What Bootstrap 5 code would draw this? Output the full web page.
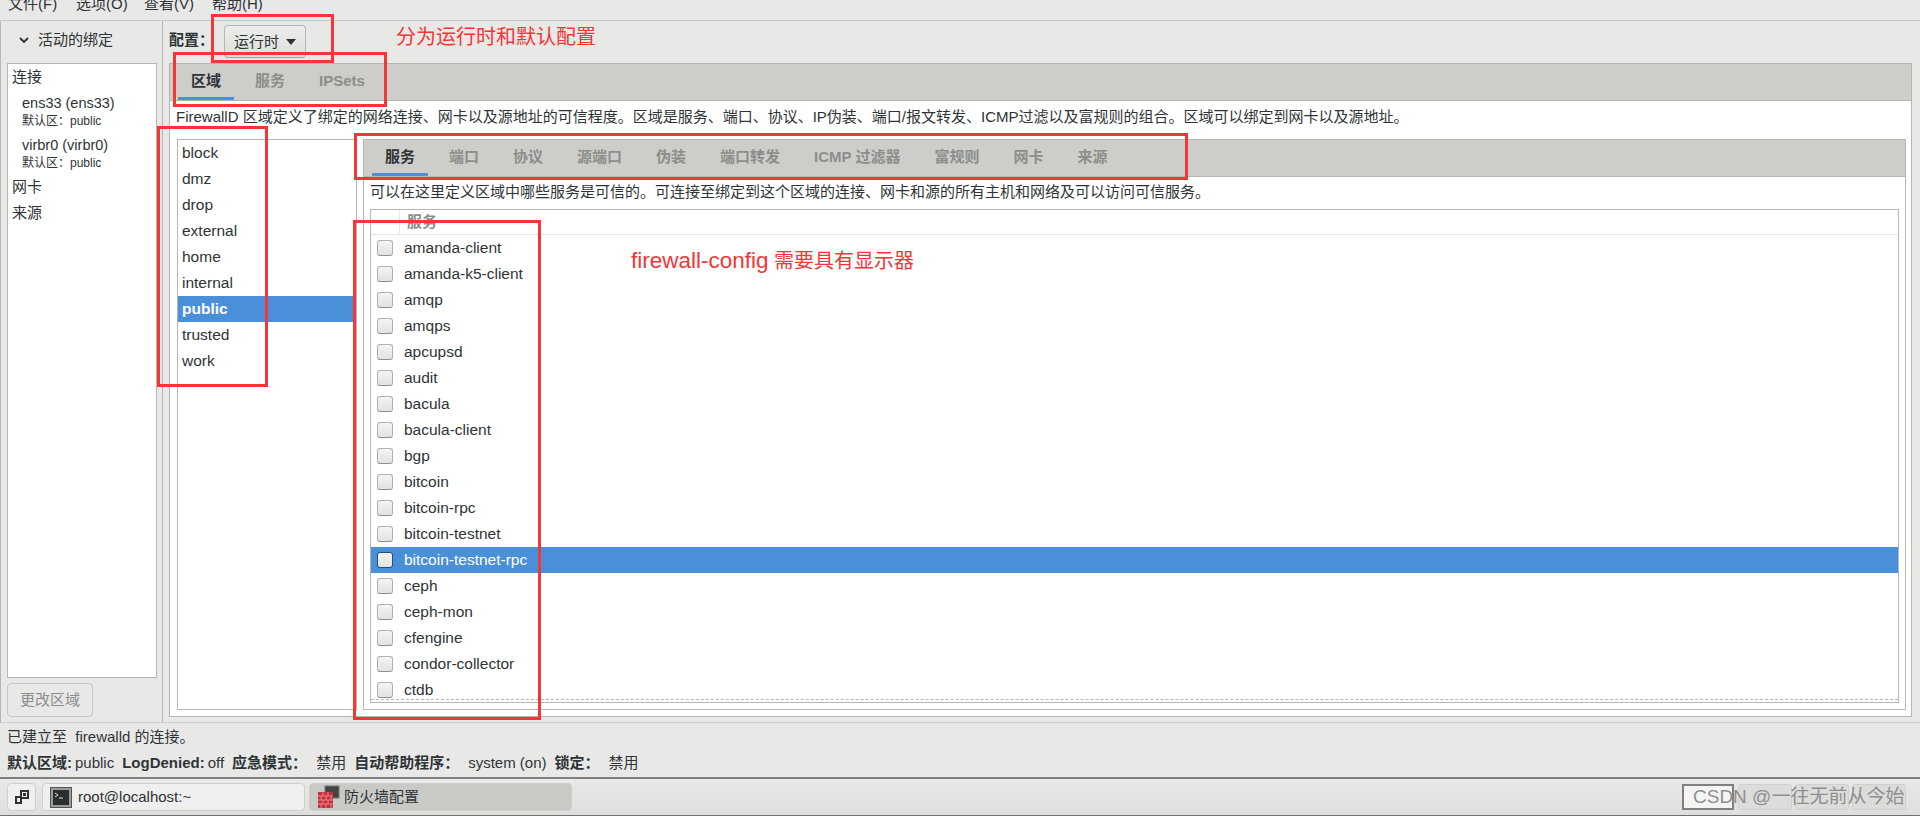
<!doctype html>
<html lang="zh"><head><meta charset="utf-8"><title>防火墙配置</title>
<link href="https://cdn.jsdelivr.net/npm/bootstrap@5.3.0/dist/css/bootstrap.min.css" rel="stylesheet">
<style>
html,body{height:816px;overflow:hidden;margin:0}
body{font-family:"Liberation Sans","Noto Sans CJK TC",sans-serif;font-size:15px;color:#2e3436;background:#e8e8e7;line-height:20px}
.shell{width:1920px;height:816px;position:relative;overflow:hidden}
.menubar{height:21px;border-bottom:1px solid #c9c9c6;overflow:hidden;flex:none;padding-left:8px}
.menubar span{position:relative;top:-6px;width:68px}
.workarea{height:702px;border-bottom:1px solid #cfcfcc;flex:none;border-left:1px solid #b6b6b3}
.sidepane{width:162px;border-right:1px solid #b6b6b3;padding:0 5px 0 6px;flex:none}
.sidehead{height:42px;padding:0 0 4px 12px;gap:9px}
.sidelist{height:615px;background:#fff;border:1px solid #b6b6b3;padding:0 4px;color:#2e3436}
.sideitem{height:26px;line-height:26px}
.conn{padding-left:10px;height:42px;line-height:18px;padding-top:4px;font-size:14.5px}
.conn small{display:block;font-size:12px;line-height:18px}
.changebtn{width:86px;height:34px;margin-top:5px;border:1px solid #c6c6c3;border-radius:4px;color:#8b8e8f;background:#e8e8e7;font-size:15px;padding:0}
.mainpane{padding:0 8px 0 6px;min-width:0}
.confrow{height:42px;gap:10px;font-weight:700;padding-bottom:4px}
.combo{width:82px;height:33px;margin-top:3px;border:1px solid #b6b6b3;border-bottom-color:#a0a09c;border-radius:4px;background:linear-gradient(#ededec,#dededc);font-weight:400;padding:0;color:#2e3436;font-size:15px}
.caret{display:inline-block;width:0;height:0;border:5px solid transparent;border-top:6px solid #2e3436;border-bottom:0;margin-left:7px;vertical-align:2px}
.book{border:1px solid #b6b6b3;background:#fff}
.outerbook{height:654px;width:1743px}
.tabstrip{background:#cdcdc9;border-bottom:1px solid #b6b6b3;height:37px;padding-left:8px;gap:8px;flex:none}
.tabitem{padding:0 13px;height:36px;line-height:33px;font-weight:700;color:#8c8e8c;border-bottom:3px solid transparent}
.tabitem.on{color:#2e3436;border-bottom-color:#4a90d9}
.desc{height:38px;line-height:32px;padding-left:6px;white-space:nowrap;flex:none}
.zonepanes{padding:0 5px 6px 7px;gap:6px;min-height:0}
.zonelist{width:180px;border:1px solid #b6b6b3;flex:none;background:#fff;font-size:15.5px}
.zonerow{height:26px;line-height:26px;padding-left:4px}
.zonerow.sel,.svcrow.sel{background:#4a90d9;color:#fff}
.zonerow.sel{font-weight:700}
.innerbook{min-width:0}
.innerdesc{height:32px;line-height:30px;padding-left:6px;white-space:nowrap;flex:none}
.treebox{margin:0 6px 6px 6px;border:1px solid #b6b6b3;overflow:hidden;position:relative;min-height:0}
.treehead{height:25px;border-bottom:1px solid #e4e4e2;flex:none}
.treehead i{display:block;width:29px;border-right:1px solid #e8e8e6}
.treehead span{padding-left:7px;font-weight:700;color:#8c8e8c;line-height:24px;height:24px;overflow:hidden}
.svcrow{height:26px;line-height:26px;padding-left:6px;gap:11px;flex:none;font-size:15.5px}
.tick{display:block;width:16px;height:16px;border:1px solid #b0b0ac;border-bottom-color:#8f8f8b;border-radius:3px;background:linear-gradient(#f4f4f3,#e2e2e0);flex:none}
.svcrow.sel .tick{border-color:#1f4f80}
.dashline{position:absolute;left:0;right:0;bottom:2px;border-bottom:1px dashed #b6b6b3}
.statuspane{height:54px;padding:1px 7px 0;flex:none}
.statline{height:26px;line-height:26px}
.statline b{margin-right:3px}
.statline b.wide{margin-right:9px}
.statline span{margin-right:8px}
.taskbar{height:39px;border-top:2px solid #7f7f7d;border-bottom:1px solid #6f6f6d;background:linear-gradient(#e9e9e8,#dededc);padding:4px 7px;gap:6px;flex:none;position:relative}
.taskbtn{height:28px;border:1px solid #cfcfcc;border-radius:4px;background:#efefee;gap:6px;padding:0 7px}
.tasksq{width:29px;justify-content:center;padding:0}
.taskwide{width:263px}
.taskon{background:#c9c9c6;margin-left:-2px;padding-left:8px;gap:4px}
.csdn{position:absolute;left:1682px;top:5px;width:236px;height:26px;display:flex;font-size:19px;font-family:"Liberation Sans","Noto Sans CJK SC",sans-serif;color:#8f8f8f;line-height:26px}
.csdnbox{position:absolute;left:0;top:0;width:52px;height:26px;background:#f4f4f3;border:2px solid #808080}
.ghosts{position:absolute;left:56px;top:0;gap:3px}
.ghosts i{display:block;width:54px;height:26px;background:#dcdcda;border:1px solid #d0d0ce;border-radius:3px}
.csdntext{position:relative;padding-left:11px;white-space:nowrap}
.redbox{position:absolute;border:3px solid #f33636;pointer-events:none}
.redtext{position:absolute;color:#f33636;font-size:20px;line-height:28px;white-space:nowrap;font-family:"Liberation Sans","Noto Sans CJK SC",sans-serif}
.redtext span{font-size:22.5px}
.r1{left:211px;top:14px;width:123px;height:49px}
.r2{left:173px;top:52px;width:214px;height:55px}
.r3{left:157px;top:126px;width:111px;height:261px}
.r4{left:354px;top:133px;width:834px;height:47px}
.r5{left:353px;top:220px;width:188px;height:500px}
.t1{left:396px;top:23px}
.t2{left:631px;top:247px}
</style></head><body>
<div class="shell d-flex flex-column">
<div class="menubar d-flex"><span>文件(F)</span><span>选项(O)</span><span>查看(V)</span><span>帮助(H)</span></div>
<div class="workarea d-flex">
 <div class="sidepane d-flex flex-column">
  <div class="sidehead d-flex align-items-center"><svg width="10" height="7" viewBox="0 0 10 7"><path d="M1 1l4 4 4-4" fill="none" stroke="#2e3436" stroke-width="1.8"/></svg><span>活动的绑定</span></div>
  <div class="sidelist">
   <div class="sideitem">连接</div>
   <div class="conn">ens33 (ens33)<small>默认区：public</small></div>
   <div class="conn">virbr0 (virbr0)<small>默认区：public</small></div>
   <div class="sideitem">网卡</div>
   <div class="sideitem">来源</div>
  </div>
  <button class="changebtn" type="button">更改区域</button>
 </div>
 <div class="mainpane flex-grow-1 d-flex flex-column">
  <div class="confrow d-flex align-items-center"><span>配置：</span><button class="combo" type="button">运行时<span class="caret"></span></button></div>
  <div class="book outerbook d-flex flex-column">
   <div class="tabstrip d-flex"><div class="tabitem on">区域</div><div class="tabitem">服务</div><div class="tabitem">IPSets</div></div>
   <div class="desc">FirewallD 区域定义了绑定的网络连接、网卡以及源地址的可信程度。区域是服务、端口、协议、IP伪装、端口/报文转发、ICMP过滤以及富规则的组合。区域可以绑定到网卡以及源地址。</div>
   <div class="zonepanes d-flex flex-grow-1">
    <div class="zonelist">
     <div class="zonerow">block</div><div class="zonerow">dmz</div><div class="zonerow">drop</div><div class="zonerow">external</div><div class="zonerow">home</div><div class="zonerow">internal</div><div class="zonerow sel">public</div><div class="zonerow">trusted</div><div class="zonerow">work</div>
    </div>
    <div class="book innerbook flex-grow-1 d-flex flex-column">
     <div class="tabstrip d-flex"><div class="tabitem on">服务</div><div class="tabitem">端口</div><div class="tabitem">协议</div><div class="tabitem">源端口</div><div class="tabitem">伪装</div><div class="tabitem">端口转发</div><div class="tabitem">ICMP 过滤器</div><div class="tabitem">富规则</div><div class="tabitem">网卡</div><div class="tabitem">来源</div></div>
     <div class="innerdesc">可以在这里定义区域中哪些服务是可信的。可连接至绑定到这个区域的连接、网卡和源的所有主机和网络及可以访问可信服务。</div>
     <div class="treebox flex-grow-1 d-flex flex-column">
      <div class="treehead d-flex"><i></i><span>服务</span></div>
      <div class="svcrow d-flex align-items-center"><span class="tick"></span>amanda-client</div>
      <div class="svcrow d-flex align-items-center"><span class="tick"></span>amanda-k5-client</div>
      <div class="svcrow d-flex align-items-center"><span class="tick"></span>amqp</div>
      <div class="svcrow d-flex align-items-center"><span class="tick"></span>amqps</div>
      <div class="svcrow d-flex align-items-center"><span class="tick"></span>apcupsd</div>
      <div class="svcrow d-flex align-items-center"><span class="tick"></span>audit</div>
      <div class="svcrow d-flex align-items-center"><span class="tick"></span>bacula</div>
      <div class="svcrow d-flex align-items-center"><span class="tick"></span>bacula-client</div>
      <div class="svcrow d-flex align-items-center"><span class="tick"></span>bgp</div>
      <div class="svcrow d-flex align-items-center"><span class="tick"></span>bitcoin</div>
      <div class="svcrow d-flex align-items-center"><span class="tick"></span>bitcoin-rpc</div>
      <div class="svcrow d-flex align-items-center"><span class="tick"></span>bitcoin-testnet</div>
      <div class="svcrow sel d-flex align-items-center"><span class="tick"></span>bitcoin-testnet-rpc</div>
      <div class="svcrow d-flex align-items-center"><span class="tick"></span>ceph</div>
      <div class="svcrow d-flex align-items-center"><span class="tick"></span>ceph-mon</div>
      <div class="svcrow d-flex align-items-center"><span class="tick"></span>cfengine</div>
      <div class="svcrow d-flex align-items-center"><span class="tick"></span>condor-collector</div>
      <div class="svcrow d-flex align-items-center"><span class="tick"></span>ctdb</div>
      <div class="dashline"></div>
     </div>
    </div>
   </div>
  </div>
 </div>
</div>
<div class="statuspane">
 <div class="statline">已建立至&nbsp; firewalld 的连接。</div>
 <div class="statline"><b>默认区域:</b><span>public</span><b>LogDenied:</b><span>off</span><b class="wide">应急模式：</b><span>禁用</span><b class="wide">自动帮助程序：</b><span>system (on)</span><b class="wide">锁定：</b><span>禁用</span></div>
</div>
<div class="taskbar d-flex">
 <div class="taskbtn tasksq d-flex align-items-center"><svg width="14" height="14" viewBox="0 0 14 14"><path d="M6 1h7v7H6z M1 7h5v6H1z" fill="none" stroke="#2e3436" stroke-width="2"/><rect x="8" y="3" width="3" height="3" fill="#2e3436"/></svg></div>
 <div class="taskbtn taskwide d-flex align-items-center"><svg width="22" height="21" viewBox="0 0 22 21"><rect x=".5" y=".5" width="21" height="20" fill="#9a9d98" stroke="#555"/><rect x="3" y="3" width="16" height="15" fill="#2b2f2f"/><path d="M5 6l3 2-3 2" fill="none" stroke="#ddd"/><path d="M9 11h4" stroke="#ddd"/></svg><span>root@localhost:~</span></div>
 <div class="taskbtn taskon taskwide d-flex align-items-center"><svg width="22" height="24" viewBox="0 0 22 24"><rect x="7" y="1" width="14" height="12" fill="#444" stroke="#777"/><rect x="0" y="7" width="15" height="16" rx="1" fill="#c5303a"/><path d="M0 11h15M0 15h15M0 19h15M5 7v4M10 7v4M3 11v4M8 11v4M13 11v4M5 15v4M10 15v4M3 19v4M8 19v4M13 19v4" stroke="#f09a9a" stroke-width=".8"/></svg><span>防火墙配置</span></div>
 <div class="csdn"><span class="csdnbox"></span><span class="ghosts d-flex"><i></i><i></i><i></i></span><span class="csdntext">CSDN @一往无前从今始</span></div>
</div>
<div class="redbox r1"></div><div class="redbox r2"></div><div class="redbox r3"></div><div class="redbox r4"></div><div class="redbox r5"></div>
<div class="redtext t1">分为运行时和默认配置</div>
<div class="redtext t2"><span>firewall-config</span> 需要具有显示器</div>
</div>
<script src="https://cdn.jsdelivr.net/npm/bootstrap@5.3.0/dist/js/bootstrap.bundle.min.js"></script>
</body></html>
